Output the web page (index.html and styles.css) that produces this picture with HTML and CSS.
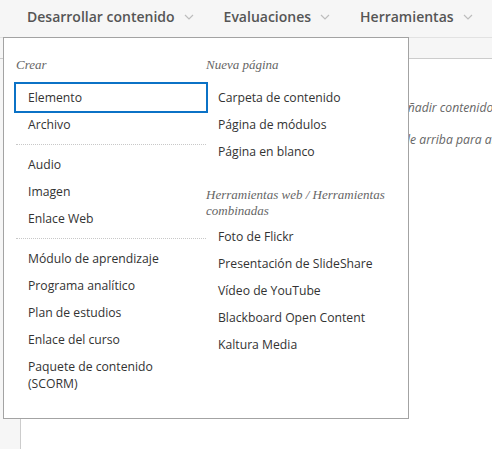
FILE: index.html
```html
<!DOCTYPE html>
<html lang="es">
<head>
<meta charset="utf-8">
<title>Desarrollar contenido</title>
<link rel="stylesheet" href="styles.css">
</head>
<body>
<div class="page">
  <nav class="topnav">
    <span class="nav-item">Desarrollar contenido <svg class="chev" width="10" height="6" viewBox="0 0 10 6"><polyline points="1,1 5,5 9,1" fill="none" stroke="#bdbdbd" stroke-width="1.2"/></svg></span>
    <span class="nav-item">Evaluaciones <svg class="chev" width="10" height="6" viewBox="0 0 10 6"><polyline points="1,1 5,5 9,1" fill="none" stroke="#bdbdbd" stroke-width="1.2"/></svg></span>
    <span class="nav-item">Herramientas <svg class="chev" width="10" height="6" viewBox="0 0 10 6"><polyline points="1,1 5,5 9,1" fill="none" stroke="#bdbdbd" stroke-width="1.2"/></svg></span>
  </nav>
  <div class="subbar"></div>
  <div class="main">
    <div class="sidebar"></div>
    <div class="content">
      <p class="hint hint-1">Añadir contenido</p>
      <p class="hint hint-2">de arriba para añadir contenido</p>
    </div>
  </div>

  <div class="dropdown">
    <div class="col">
      <div class="heading">Crear</div>
      <ul class="list">
        <li class="item focused">Elemento</li>
        <li class="item">Archivo</li>
      </ul>
      <div class="sep"></div>
      <ul class="list">
        <li class="item">Audio</li>
        <li class="item">Imagen</li>
        <li class="item">Enlace Web</li>
      </ul>
      <div class="sep"></div>
      <ul class="list">
        <li class="item">Módulo de aprendizaje</li>
        <li class="item">Programa analítico</li>
        <li class="item">Plan de estudios</li>
        <li class="item">Enlace del curso</li>
        <li class="item">Paquete de contenido (SCORM)</li>
      </ul>
    </div>
    <div class="col">
      <div class="heading">Nueva página</div>
      <ul class="list">
        <li class="item">Carpeta de contenido</li>
        <li class="item">Página de módulos</li>
        <li class="item">Página en blanco</li>
      </ul>
      <div class="heading heading-2">Herramientas web / Herramientas combinadas</div>
      <ul class="list">
        <li class="item">Foto de Flickr</li>
        <li class="item">Presentación de SlideShare</li>
        <li class="item">Vídeo de YouTube</li>
        <li class="item">Blackboard Open Content</li>
        <li class="item">Kaltura Media</li>
      </ul>
    </div>
  </div>
</div>
</body>
</html>
```

FILE: styles.css
```css
* { box-sizing: border-box; }

html, body {
  margin: 0;
  padding: 0;
  background: #ffffff;
}

body {
  font-family: "Open Sans", "Liberation Sans", sans-serif;
  color: #333333;
}

.page {
  position: relative;
  display: flex;
  flex-direction: column;
  min-height: 100vh;
}

.topnav {
  display: flex;
  align-items: center;
  gap: 30px;
  height: 38px;
  padding: 0 0 5px 27px;
  background: #f6f6f6;
  border-bottom: 1px solid #e2e2e2;
  white-space: nowrap;
  overflow: hidden;
}

.nav-item {
  display: flex;
  align-items: center;
  gap: 9px;
  font-size: 14px;
  font-weight: 600;
  color: #555555;
}

.chev {
  display: block;
  margin-top: 2px;
}

.subbar {
  height: 21px;
  background: #f6f6f6;
  border-bottom: 1px solid #cccccc;
}

.main {
  flex: 1;
  display: grid;
  grid-template-columns: 21px 1fr;
}

.sidebar {
  background: #f6f6f6;
  border-right: 1px solid #cccccc;
}

.content {
  padding-top: 39px;
  overflow: hidden;
  white-space: nowrap;
}

.hint {
  margin: 0;
  font-size: 12.2px;
  line-height: 20px;
  font-style: italic;
  color: #666666;
}

.hint-1 { padding-left: 380px; }
.hint-2 { margin-top: 12px; padding-left: 382px; }

.dropdown {
  position: absolute;
  left: 3px;
  top: 37px;
  width: 406px;
  height: 382px;
  background: #ffffff;
  border: 1px solid #a3a3a3;
  padding: 19px 12px 20px 12px;
  display: grid;
  grid-template-columns: 190px 1fr;
  align-items: start;
}

.heading {
  font-family: "Liberation Serif", "Times New Roman", serif;
  font-style: italic;
  font-size: 13px;
  line-height: 16px;
  color: #666666;
  margin-bottom: 11px;
}

.heading-2 {
  margin-top: 22px;
  margin-bottom: 4px;
  padding-right: 8px;
}

.list {
  list-style: none;
  margin: 0;
  padding: 0;
}

.item {
  font-size: 12.2px;
  line-height: 17px;
  padding: 5px 12px;
  color: #333333;
}

.item.focused {
  outline: 2px solid #0b72c6;
}

.sep {
  margin: 6px 0;
  border-top: 1px dotted #c8c8c8;
}
```
